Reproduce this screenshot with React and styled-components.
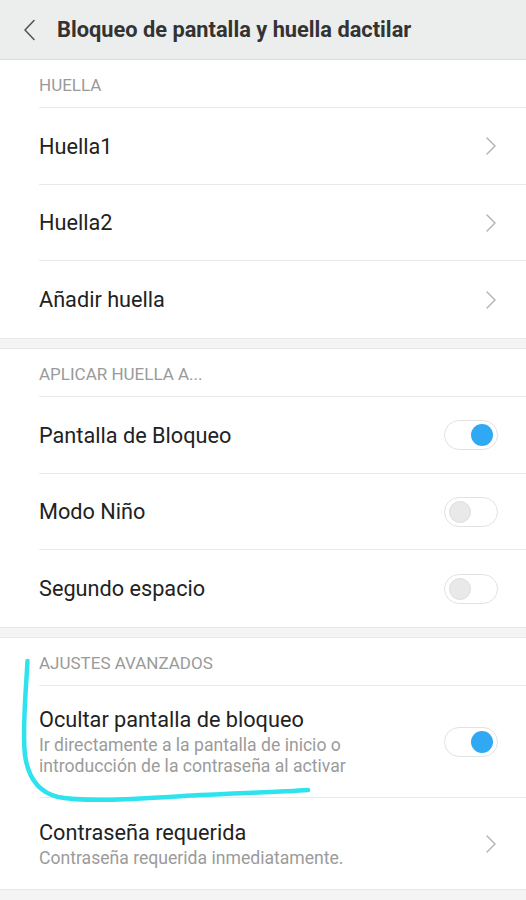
import React from "react";
import styled, { createGlobalStyle } from "styled-components";

const Global = createGlobalStyle`
  html, body { margin: 0; padding: 0; background: #f4f4f4; }
  body { font-family: Roboto, "Noto Sans", Arial, sans-serif; }
  #root { width: 526px; min-height: 900px; }
`;

const Page = styled.div`
  position: relative;
  width: 526px;
  min-height: 900px;
  background: #f4f4f4;
`;

const Header = styled.header`
  height: 59px;
  background: #eceeed;
  border-bottom: 1px solid #d9dbda;
  display: flex;
  align-items: center;
  padding-left: 22px;
  gap: 21px;
`;

const Title = styled.h1`
  margin: 0;
  font-size: 21.8px;
  font-weight: 700;
  color: #333;
`;

const Section = styled.section`
  background: #fff;
  margin-bottom: 9px;
  border-top: ${(p) => (p.$first ? "none" : "1px solid #e8e8e8")};
  border-bottom: 1px solid #e8e8e8;
`;

const SectionLabel = styled.div`
  margin-left: 39px;
  height: 48px;
  box-sizing: border-box;
  padding-top: 2px;
  display: flex;
  align-items: center;
  font-size: 17px;
  color: #9a9a9a;
  border-bottom: 1px solid #eaeaea;
`;

const Row = styled.div`
  margin-left: 39px;
  padding-right: 29px;
  min-height: ${(p) => p.$h || 77}px;
  display: flex;
  align-items: center;
  justify-content: space-between;
  border-bottom: ${(p) => (p.$last ? "none" : "1px solid #eaeaea")};
  box-sizing: border-box;
`;

const TextCol = styled.div`
  display: flex;
  flex-direction: column;
`;

const RowTitle = styled.div`
  font-size: 21.7px;
  color: #222;
  line-height: 27px;
`;

const RowSub = styled.div`
  font-size: 17.6px;
  color: #9b9b9b;
  line-height: 21px;
  margin-top: 2px;
`;

const Toggle = styled.div`
  width: 54px;
  height: 30px;
  box-sizing: border-box;
  border-radius: 15px;
  border: 1px solid #e2e2e2;
  background: #fff;
  display: flex;
  align-items: center;
  justify-content: ${(p) => (p.$on ? "flex-end" : "flex-start")};
  padding: 0 4px;
  margin-right: -1px;
`;

const Knob = styled.div`
  width: 22px;
  height: 22px;
  border-radius: 50%;
  background: ${(p) => (p.$on ? "#2fa9f3" : "#e9e9e9")};
  border: ${(p) => (p.$on ? "none" : "1px solid #dedede")};
  box-sizing: border-box;
`;

const Overlay = styled.svg`
  position: absolute;
  left: 0;
  top: 0;
  pointer-events: none;
`;

const Chevron = () => (
  <svg width="12" height="20" viewBox="0 0 12 20">
    <path d="M2 2 L10 10 L2 18" fill="none" stroke="#b5b5b5" strokeWidth="1.5" strokeLinecap="round" strokeLinejoin="round" />
  </svg>
);

const Back = () => (
  <svg width="14" height="22" viewBox="0 0 14 22">
    <path d="M12 1.5 L3 11 L12 20.5" fill="none" stroke="#555" strokeWidth="1.6" strokeLinecap="round" strokeLinejoin="round" />
  </svg>
);

const Switch = ({ on }) => (
  <Toggle $on={on}>
    <Knob $on={on} />
  </Toggle>
);

export default function App() {
  return (
    <Page>
      <Global />
      <Header>
        <Back />
        <Title>Bloqueo de pantalla y huella dactilar</Title>
      </Header>

      <Section $first>
        <SectionLabel>HUELLA</SectionLabel>
        <Row><RowTitle>Huella1</RowTitle><Chevron /></Row>
        <Row $h={76}><RowTitle>Huella2</RowTitle><Chevron /></Row>
        <Row $last><RowTitle>Añadir huella</RowTitle><Chevron /></Row>
      </Section>

      <Section>
        <SectionLabel>APLICAR HUELLA A...</SectionLabel>
        <Row><RowTitle>Pantalla de Bloqueo</RowTitle><Switch on /></Row>
        <Row $h={76}><RowTitle>Modo Niño</RowTitle><Switch /></Row>
        <Row $last><RowTitle>Segundo espacio</RowTitle><Switch /></Row>
      </Section>

      <Section>
        <SectionLabel>AJUSTES AVANZADOS</SectionLabel>
        <Row $h={112}>
          <TextCol>
            <RowTitle>Ocultar pantalla de bloqueo</RowTitle>
            <RowSub>Ir directamente a la pantalla de inicio o<br />introducción de la contraseña al activar</RowSub>
          </TextCol>
          <Switch on />
        </Row>
        <Row $h={91} $last>
          <TextCol>
            <RowTitle>Contraseña requerida</RowTitle>
            <RowSub>Contraseña requerida inmediatamente.</RowSub>
          </TextCol>
          <Chevron />
        </Row>
      </Section>

      <Overlay width="526" height="900" viewBox="0 0 526 900">
        <path
          d="M27.5 661 C26 690 22 730 25 755 C28 778 38 792 58 797 C90 803 150 798 200 795 C240 793 280 792 308 790"
          fill="none"
          stroke="#2fe3ee"
          strokeWidth="4.5"
          strokeLinecap="round"
        />
      </Overlay>
    </Page>
  );
}
